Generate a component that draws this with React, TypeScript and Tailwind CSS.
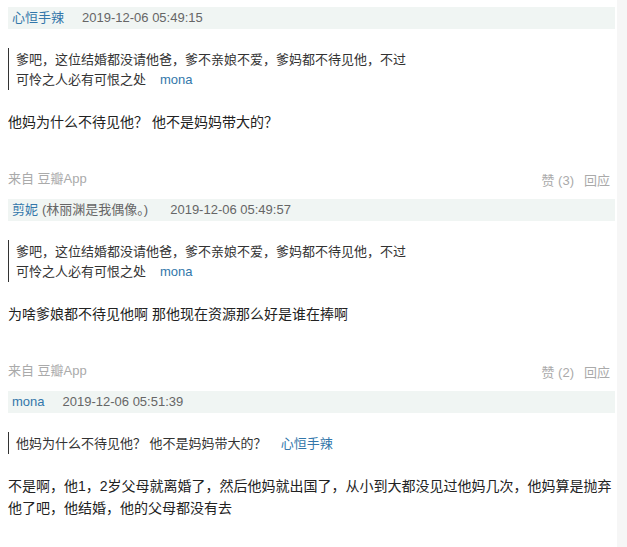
const font = { fontFamily: '"Liberation Sans", Arial, "Noto Sans CJK SC", sans-serif' };

type Reply = {
  author: string;
  sign?: string;
  time: string;
  quote: string;
  quoteAuthor: string;
  text: string;
  likes?: number;
};

const replies: Reply[] = [
  {
    author: "心恒手辣",
    time: "2019-12-06 05:49:15",
    quote: "爹吧，这位结婚都没请他爸，爹不亲娘不爱，爹妈都不待见他，不过可怜之人必有可恨之处",
    quoteAuthor: "mona",
    text: "他妈为什么不待见他？ 他不是妈妈带大的？",
    likes: 3,
  },
  {
    author: "剪妮",
    sign: "(林丽渊是我偶像。)",
    time: "2019-12-06 05:49:57",
    quote: "爹吧，这位结婚都没请他爸，爹不亲娘不爱，爹妈都不待见他，不过可怜之人必有可恨之处",
    quoteAuthor: "mona",
    text: "为啥爹娘都不待见他啊 那他现在资源那么好是谁在捧啊",
    likes: 2,
  },
  {
    author: "mona",
    time: "2019-12-06 05:51:39",
    quote: "他妈为什么不待见他？ 他不是妈妈带大的？",
    quoteAuthor: "心恒手辣",
    text: "不是啊，他1，2岁父母就离婚了，然后他妈就出国了，从小到大都没见过他妈几次，他妈算是抛弃他了吧，他结婚，他的父母都没有去",
  },
];

function ReplyItem({ r }: { r: Reply }) {
  return (
    <div>
      <div className="flex h-[22px] items-center bg-[#f0f5f3] px-1 text-[13px]">
        <span className="text-[#3377aa]">{r.author}</span>
        {r.sign && <span className="ml-1 text-[#666]">{r.sign}</span>}
        <span className={r.sign ? "ml-[22px] text-[#666]" : "ml-[18px] text-[#666]"}>{r.time}</span>
      </div>
      <div className="mt-[19px] max-w-[400px] border-l border-[#333] pt-[2px] pl-[7px] text-[13px] leading-[20px] text-[#333]">
        {r.quote}
        <span className="ml-[14px] text-[#3377aa]">{r.quoteAuthor}</span>
      </div>
      <p className="mt-[21px] text-[14px] leading-[22px] text-[#222]">{r.text}</p>
      {r.likes !== undefined && (
        <div className="mt-[36px] mb-[10px] flex h-[20px] items-center justify-between text-[13px] text-[#aaa]">
          <span>来自 豆瓣App</span>
          <span className="mt-1 pr-[5px]">
            赞 ({r.likes})<span className="ml-[10px]">回应</span>
          </span>
        </div>
      )}
    </div>
  );
}

export default function App() {
  return (
    <div className="flex h-[547px] overflow-hidden bg-white" style={font}>
      <div className="w-[617px] pt-[7px] pl-2 pr-[2px]">
        {replies.map((r, i) => (
          <ReplyItem key={i} r={r} />
        ))}
      </div>
      <div className="flex-1 bg-[#f6f6f6]" />
    </div>
  );
}
